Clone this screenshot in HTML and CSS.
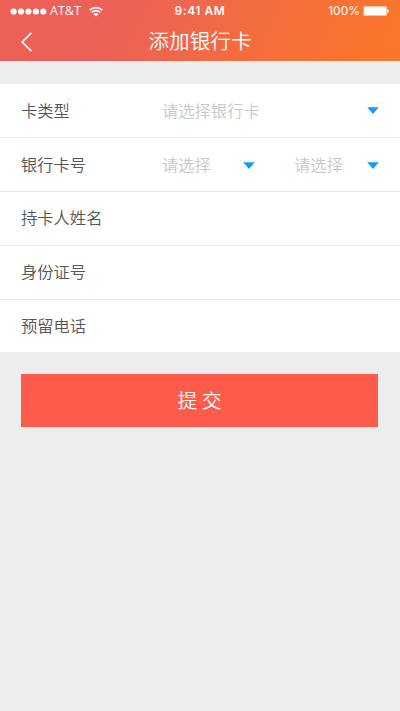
FILE: index.html
```html
<!DOCTYPE html>
<html lang="zh-CN">
<head>
<meta charset="utf-8">
<title>添加银行卡</title>
<link rel="stylesheet" href="styles.css">
</head>
<body>
<header class="header">
  <div class="status">
    <div class="carrier">
      <svg class="signal" width="37" height="7" viewBox="0 0 37 7" fill="#fff"><circle cx="3.6" cy="3.5" r="3.1"/><circle cx="11" cy="3.5" r="3.1"/><circle cx="18.4" cy="3.5" r="3.1"/><circle cx="25.9" cy="3.5" r="3.1"/><circle cx="33.3" cy="3.5" r="3.1"/></svg>
      <span class="network">AT&amp;T</span>
      <svg class="wifi" width="14" height="11" viewBox="0 0 14 11" fill="none" stroke="#fff" stroke-width="1.7"><path d="M.7 4.1A9 9 0 0 1 13.3 4.1M2.8 6.4a6 6 0 0 1 8.4 0"/><path d="M7 10.5 4.5 8.2a3.6 3.6 0 0 1 5 0z" fill="#fff" stroke="none"/></svg>
    </div>
    <span class="time">9:41 AM</span>
    <div class="power">
      <span>100%</span>
      <svg width="27" height="12" viewBox="0 0 27 12"><rect x=".2" y=".9" width="24" height="10.2" rx="1.5" fill="#fff" fill-opacity=".55"/><rect x="1.3" y="2" width="21.8" height="8" rx=".7" fill="#fff"/><path d="M24.3 4v4q1.6-.6 1.6-2t-1.6-2z" fill="#fff"/></svg>
    </div>
  </div>
  <div class="navbar">
    <svg class="back" width="12" height="20" viewBox="0 0 12 20" fill="none" stroke="#fff" stroke-width="1.7"><path d="M10.4.8 1.2 10l9.2 9.2"/></svg>
    <h1 class="title">添加银行卡</h1>
  </div>
</header>
<main>
  <div class="form">
    <div class="row"><span class="label">卡类型</span><div class="select wide"><span class="hint">请选择银行卡</span><svg class="arrow" width="12" height="7" viewBox="0 0 12 7"><path d="M.2.2h11.6L6 7z"/></svg></div></div>
    <div class="row"><span class="label">银行卡号</span><div class="select first"><span class="hint">请选择</span><svg class="arrow lower" width="12" height="7" viewBox="0 0 12 7"><path d="M.2.2h11.6L6 7z"/></svg></div><div class="select second"><span class="hint">请选择</span><svg class="arrow lower" width="12" height="7" viewBox="0 0 12 7"><path d="M.2.2h11.6L6 7z"/></svg></div></div>
    <div class="row"><span class="label raised">持卡人姓名</span></div>
    <div class="row"><span class="label raised">身份证号</span></div>
    <div class="row last"><span class="label">预留电话</span></div>
  </div>
  <button class="submit" type="button">提 交</button>
</main>
</body>
</html>
```
FILE: styles.css
```css
* { box-sizing: border-box; }
body {
  margin: 0;
  min-height: 711px;
  background: #ededed;
  font-family: "Noto Sans CJK SC", sans-serif;
  font-weight: 350;
}
.header {
  height: 61px;
  color: #fff;
  background: linear-gradient(115deg, #ec6058 28%, #f36b42 58%, #fa762a 95%);
}
.status {
  display: grid;
  grid-template-columns: 1fr auto 1fr;
  align-items: center;
  height: 22px;
  padding: 0 10px;
  font: 400 12px/22px Inter, sans-serif;
}
.carrier, .power { display: flex; align-items: center; }
.network { margin: 0 8px 0 3px; font: 400 12.5px/22px "Open Sans", sans-serif; }
.time { font-weight: 600; font-size: 12px; letter-spacing: .55px; }
.power { justify-content: flex-end; gap: 3px; }
.navbar {
  display: grid;
  grid-template-columns: 21px 1fr 21px;
  align-items: center;
  height: 39px;
  padding: 0 21px;
}
.title {
  margin: 0;
  padding-bottom: 2px;
  font-size: 20.6px;
  font-weight: 350;
  line-height: 37px;
  text-align: center;
}
.form {
  margin-top: 23px;
  background: #fff;
}
.row {
  display: flex;
  align-items: center;
  height: 54px;
  padding: 0 21px;
  border-bottom: 1px solid #e9e9e9;
  font-size: 16.3px;
  color: #555;
}
.row.last { height: 52px; border-bottom: 0; }
.label { width: 141px; padding-bottom: 2px; white-space: nowrap; }
.label.raised { padding-bottom: 4px; }
.select {
  display: flex;
  align-items: center;
  justify-content: space-between;
  color: #c8c8c8;
}
.hint { padding-bottom: 2px; }
.wide { width: 217px; }
.first { width: 93px; }
.second { width: 85px; margin-left: 39px; }
.arrow { fill: #149bff; }
.arrow.lower { margin-top: 1px; }
.submit {
  display: block;
  width: 357px;
  height: 53px;
  margin: 22px 0 0 21px;
  padding: 0 0 2px;
  border: 0;
  background: #ff5b4b;
  color: #fff;
  font: 350 19.8px/51px "Noto Sans CJK SC", sans-serif;
}
```
